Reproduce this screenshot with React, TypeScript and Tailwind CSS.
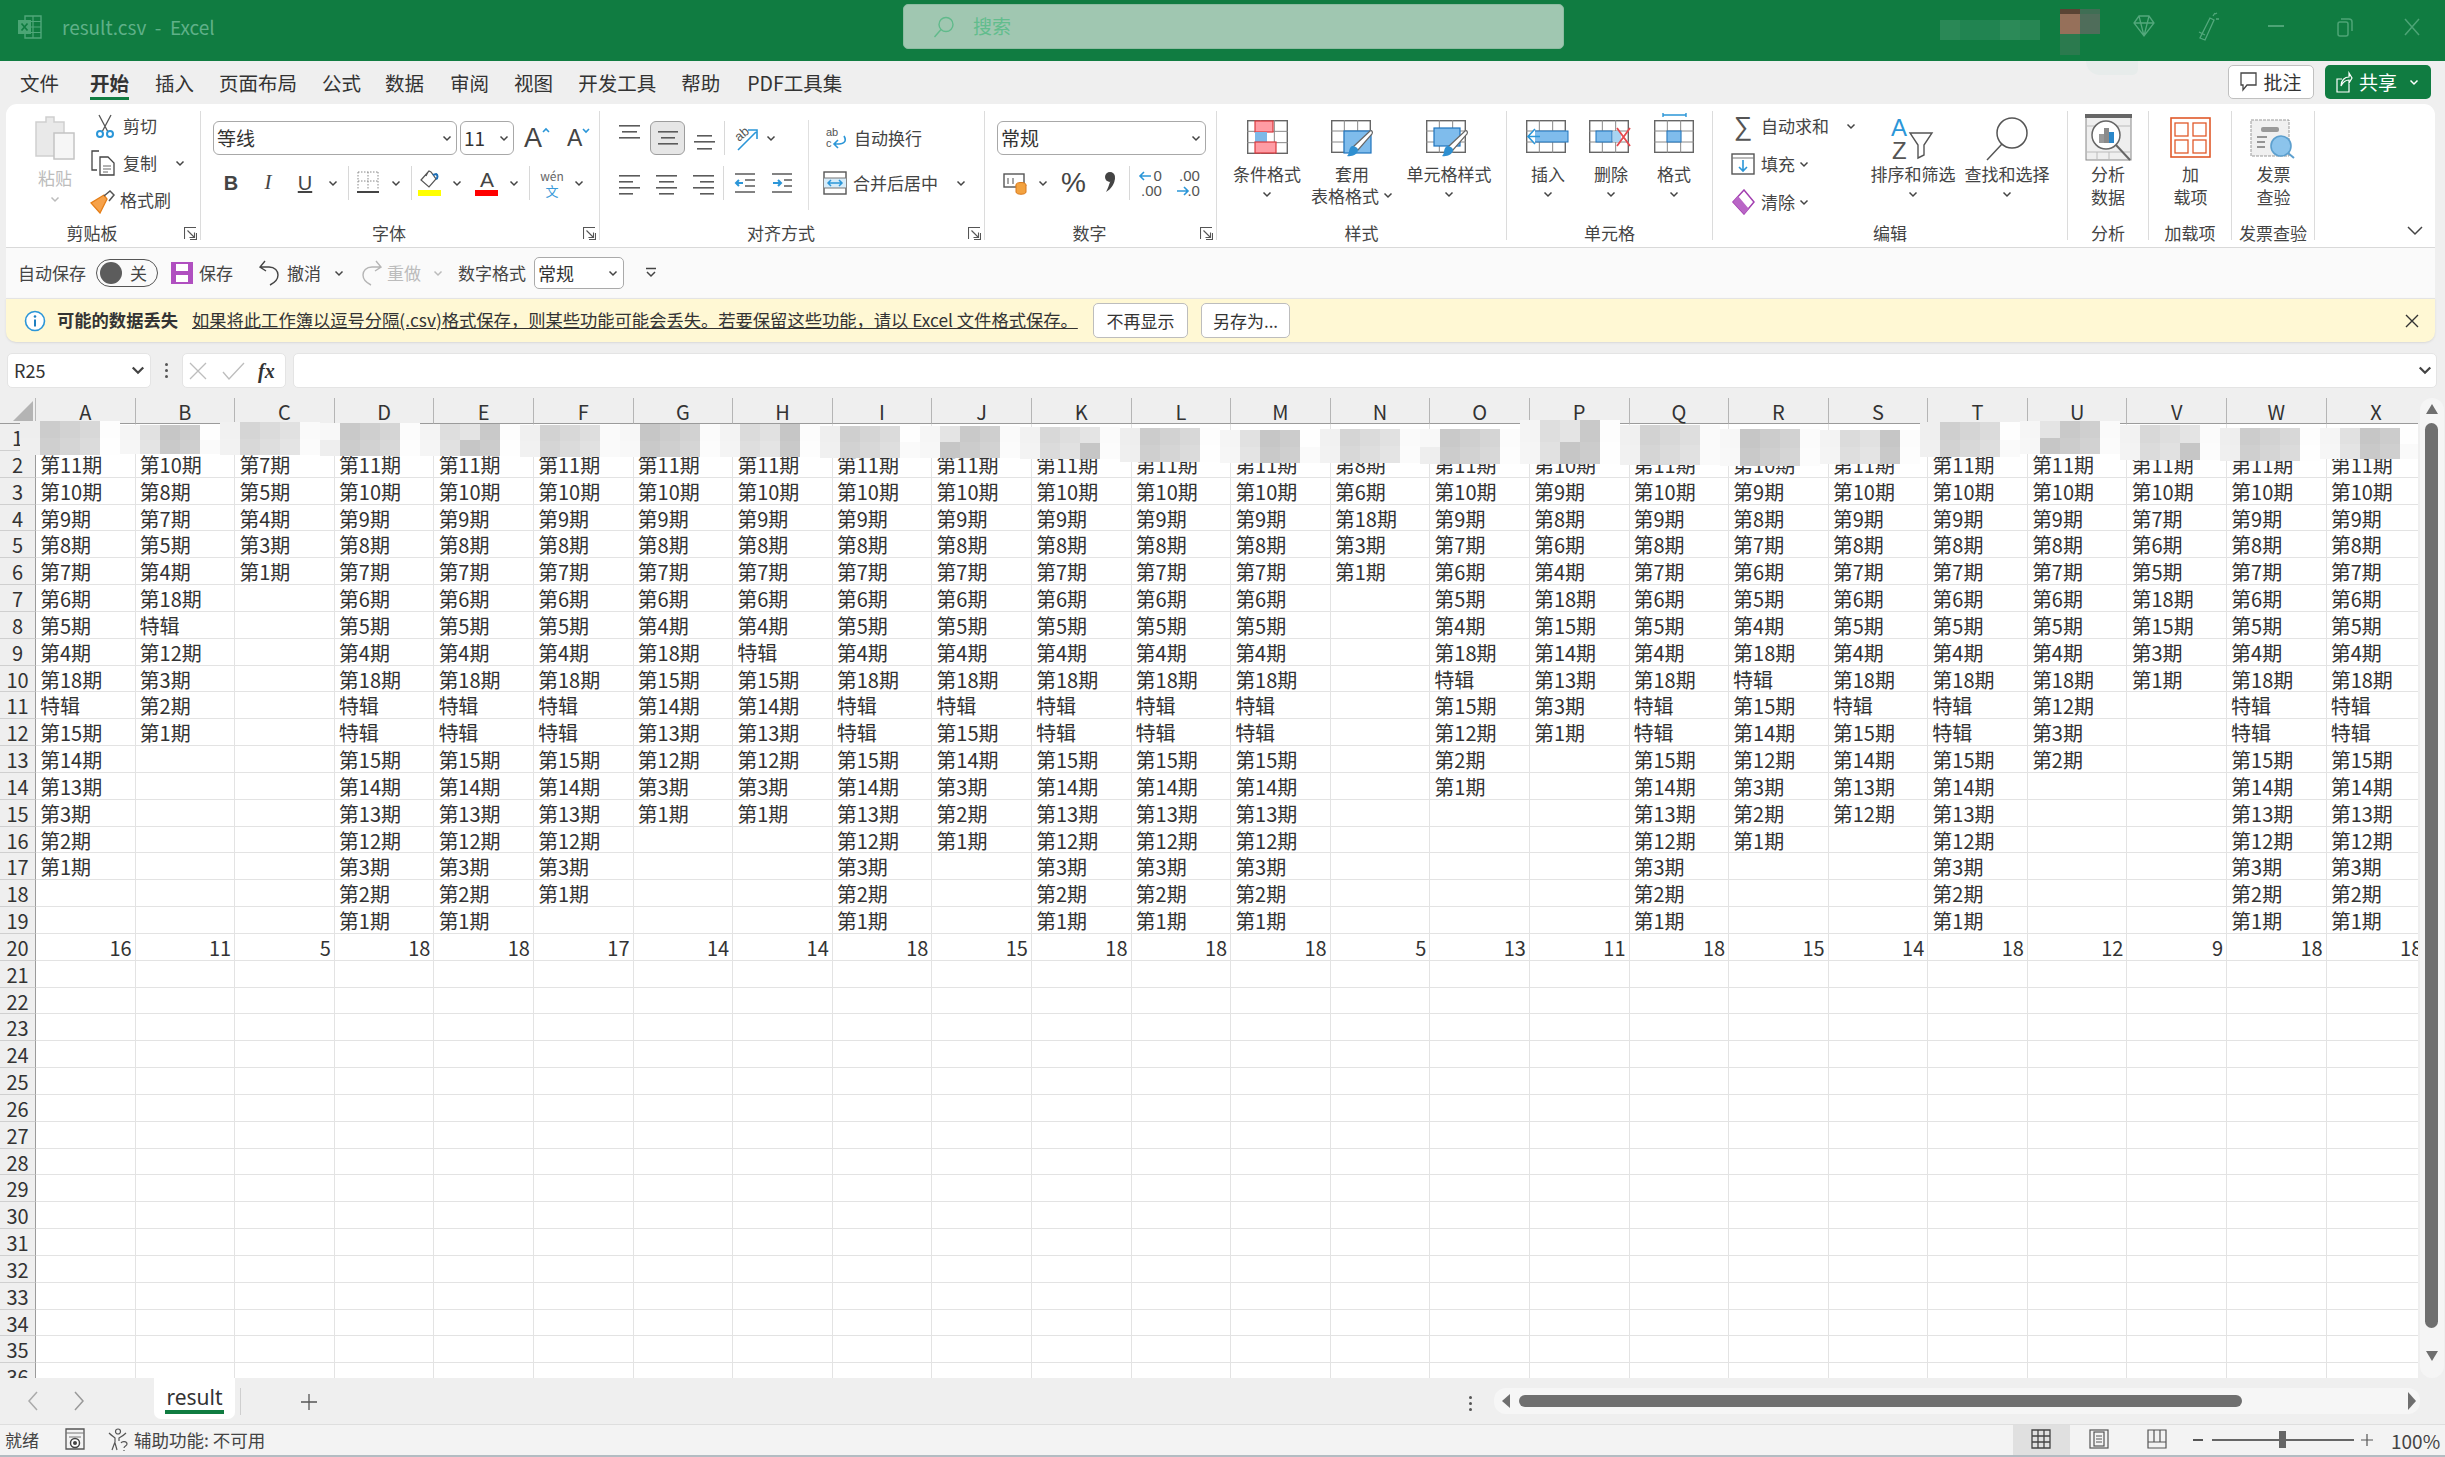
import React from "react";

const INK = "#5b5b5b";
const BLUE = "#2b96d8";
const COLS = "ABCDEFGHIJKLMNOPQRSTUVWX".split("");

const q = (s: string) => s.split(" ").map((v) => (v === "特" ? "特辑" : `第${v}期`));
const FULL = "11 10 9 8 7 6 5 4 18 特 特 15 14 13 12 3 2 1";

// one entry per column, cells go from row 2 downwards
const DATA: string[][] = [
  q("11 10 9 8 7 6 5 4 18 特 15 14 13 3 2 1"),
  q("10 8 7 5 4 18 特 12 3 2 1"),
  q("7 5 4 3 1"),
  q(FULL),
  q(FULL),
  q("11 10 9 8 7 6 5 4 18 特 特 15 14 13 12 3 1"),
  q("11 10 9 8 7 6 4 18 15 14 13 12 3 1"),
  q("11 10 9 8 7 6 4 特 15 14 13 12 3 1"),
  q(FULL),
  q("11 10 9 8 7 6 5 4 18 特 15 14 3 2 1"),
  q(FULL),
  q(FULL),
  q(FULL),
  q("8 6 18 3 1"),
  q("11 10 9 7 6 5 4 18 特 15 12 2 1"),
  q("10 9 8 6 4 18 15 14 13 3 1"),
  q(FULL),
  q("10 9 8 7 6 5 4 18 特 15 14 12 3 2 1"),
  q("11 10 9 8 7 6 5 4 18 特 15 14 13 12"),
  q(FULL),
  q("11 10 9 8 7 6 5 4 18 12 3 2"),
  q("11 10 7 6 5 18 15 3 1"),
  q(FULL),
  q(FULL),
];
const TOTALS = [16, 11, 5, 18, 18, 17, 14, 14, 18, 15, 18, 18, 18, 5, 13, 11, 18, 15, 14, 18, 12, 9, 18, 18];

// top and height of the smudged band over row 1, per column
const BAND: [number, number][] = [
  [421, 34], [425, 29], [422, 33], [423, 33], [424, 32], [425, 32], [424, 33], [424, 33],
  [426, 32], [426, 32], [427, 32], [428, 34], [430, 33], [429, 34], [429, 35], [420, 44],
  [425, 40], [429, 37], [430, 34], [422, 35], [421, 33], [425, 35], [428, 33], [428, 31],
];

function Chev({ className = "", color = "#444" }: { className?: string; color?: string }) {
  return (
    <svg width="10" height="7" viewBox="0 0 10 7" className={className}>
      <path d="M1.5 1.5 5 5l3.5-3.5" fill="none" stroke={color} strokeWidth="1.5" />
    </svg>
  );
}

function Launcher({ className = "" }: { className?: string }) {
  return (
    <svg width="13" height="13" viewBox="0 0 13 13" className={className}>
      <path d="M.5 12V.5H12M3.5 3.5l7 7M10.5 5.5v5h-5M12.5 6v6.5H6" fill="none" stroke="#555" strokeWidth="1.1" />
    </svg>
  );
}

function Group({ w, label, launcher, children }: { w: string; label: string; launcher?: boolean; children: React.ReactNode }) {
  return (
    <div className={`${w} relative h-[129px] shrink-0 border-r border-[#dcdcdc] flex flex-col`}>
      <div className="flex-1 min-h-0">{children}</div>
      <div className={`h-[19px] text-center text-[17px] leading-[24px] text-[#444] whitespace-nowrap ${launcher ? "pr-[22px]" : ""}`}>{label}</div>
      {launcher && <Launcher className="absolute right-[3px] bottom-[0px]" />}
    </div>
  );
}

function Lines({ rows }: { rows: [number, number, number][] }) {
  return (
    <svg width="22" height="26" viewBox="0 0 22 26">
      {rows.map(([y, a, b]) => (
        <rect key={y} x={a} y={y} width={b - a} height="1.6" fill={INK} />
      ))}
    </svg>
  );
}

function VDiv({ className = "" }: { className?: string }) {
  return <div className={`w-px h-[34px] shrink-0 bg-[#d8d8d8] ${className}`} />;
}

function Brush({ x, y }: { x: number; y: number }) {
  return (
    <g transform={`translate(${x} ${y})`}>
      <path d="M24 0c2-1 3 1 2 3L12 19l-5-3z" fill="#fff" stroke="#666" strokeWidth="1.2" />
      <path d="M6 15c3 0 6 2 6 4 0 4-6 7-11 6 3-2 1-8 5-10z" fill="#2f8fd0" />
    </g>
  );
}

function SheetGrid({ w = 40, h = 33 }: { w?: number; h?: number }) {
  const cw = w / 3;
  const ch = h / 3;
  return (
    <g fill="none" stroke="#666" strokeWidth="1.4">
      <rect x=".7" y=".7" width={w - 1.4} height={h - 1.4} />
      <path d={`M${cw} 0v${h}M${cw * 2} 0v${h}M0 ${ch}h${w}M0 ${ch * 2}h${w}`} strokeWidth="1" stroke="#888" />
    </g>
  );
}

function StackBtn({ icon, lines, chev = true, w }: { icon: React.ReactNode; lines: string[]; chev?: boolean; w: string }) {
  return (
    <div className={`${w} shrink-0 flex flex-col items-center text-[17px] leading-[23px] text-[#444] whitespace-nowrap`}>
      <div className="h-[50px] pt-[9px] flex items-start justify-center">{icon}</div>
      <div className="mt-[1px]">{lines[0]}</div>
      {lines[1] && <div>{lines[1]}</div>}
      {chev && <Chev className="mt-[6px]" />}
    </div>
  );
}

function TitleBar() {
  return (
    <div className="h-[61px] bg-[#107c41] flex items-center relative shrink-0">
      <svg width="24" height="24" viewBox="0 0 24 24" className="ml-[18px] -mt-[8px]">
        <path d="M7 1h16v22H7z" fill="none" stroke="#50a77a" strokeWidth="1.4" />
        <path d="M15 1v22M7 6.5h16M7 12h16M7 17.5h16" stroke="#50a77a" strokeWidth="1.2" />
        <rect x="0" y="5" width="13" height="14" fill="#4ba575" />
        <path d="M3.5 8.5l6 7M9.5 8.5l-6 7" stroke="#107c41" strokeWidth="1.7" />
      </svg>
      <div className="ml-[20px] -mt-[6px] text-[19px] text-[#5fb088]">result.csv&nbsp; -&nbsp; Excel</div>
      <div className="absolute left-[903px] top-[4px] w-[661px] h-[45px] rounded-[5px] bg-[#a0c7b1] border border-[#8cbca1] flex items-center pl-[29px]">
        <svg width="22" height="22" viewBox="0 0 22 22">
          <circle cx="13" cy="8.5" r="7" fill="none" stroke="#60ba8b" strokeWidth="1.4" />
          <path d="M8 13.5 1.5 21" stroke="#60ba8b" strokeWidth="1.4" />
        </svg>
        <span className="ml-[18px] text-[19px] text-[#62bd8d]">搜索</span>
      </div>
      {/* blurred account name and avatar */}
      <div className="absolute left-[1940px] top-[20px] flex h-[20px]">
        <div className="w-[20px] bg-[#2a8856]" />
        <div className="w-[40px] bg-[#218451]" />
        <div className="w-[20px] bg-[#2c8a58]" />
        <div className="w-[20px] bg-[#278653]" />
      </div>
      <div className="absolute left-[2060px] top-[9px] w-[40px] h-[46px] grid grid-cols-2 grid-rows-[5px_20px_21px]">
        <div className="bg-[#5a4434]" />
        <div className="bg-[#3f6e54]" />
        <div className="bg-[#96705a]" />
        <div className="bg-[#4f6d5a]" />
        <div className="bg-[#2b7a4e]" />
        <div className="bg-[#107c41]" />
      </div>
      <svg width="24" height="24" viewBox="0 0 24 24" className="absolute left-[2132px] top-[14px]">
        <path d="M7 2h10l5 7-10 13L2 9zM2 9h20M7 2l5 20 5-20" fill="none" stroke="#53a87c" strokeWidth="1.3" />
      </svg>
      <svg width="24" height="30" viewBox="0 0 24 30" className="absolute left-[2196px] top-[12px]">
        <path d="M14 6 4 26l5 2 9-20zM3 20l6 3M19 2l2-1M20 7l3 0M17 4l2-3" fill="none" stroke="#53a87c" strokeWidth="1.3" />
      </svg>
      <div className="absolute left-[2268px] top-[25px] w-[16px] h-[2px] bg-[#4da476]" />
      <svg width="16" height="20" viewBox="0 0 16 20" className="absolute left-[2337px] top-[17px]">
        <rect x="1" y="5" width="10" height="14" rx="2" fill="none" stroke="#4da476" strokeWidth="1.5" />
        <path d="M4 2h8c2 0 3 1 3 3v9" fill="none" stroke="#4da476" strokeWidth="1.5" />
      </svg>
      <svg width="18" height="20" viewBox="0 0 18 20" className="absolute left-[2403px] top-[17px]">
        <path d="M2 2l14 16M16 2 2 18" stroke="#4da476" strokeWidth="1.5" />
      </svg>
    </div>
  );
}

function TabRow() {
  const tabs: [string, string][] = [
    ["文件", "ml-[20px]"],
    ["开始", "ml-[31px]"],
    ["插入", "ml-[26px]"],
    ["页面布局", "ml-[25px]"],
    ["公式", "ml-[25px]"],
    ["数据", "ml-[24px]"],
    ["审阅", "ml-[26px]"],
    ["视图", "ml-[25px]"],
    ["开发工具", "ml-[25px]"],
    ["帮助", "ml-[25px]"],
    ["PDF工具集", "ml-[27px]"],
  ];
  return (
    <div className="h-[43px] bg-[#efefef] flex items-center relative shrink-0">
      {tabs.map(([t, m]) => (
        <div key={t} className={`${m} relative text-[19.5px] leading-[43px] text-[#333] ${t === "开始" ? "font-bold" : ""}`}>
          {t}
          {t === "开始" && <div className="absolute left-0 right-0 bottom-[4px] h-[3px] bg-[#107c41]" />}
        </div>
      ))}
      <div className="absolute left-[2086px] top-0 w-[52px] h-[14px] bg-[#e7eceb] rounded-bl-[30px] rounded-br-[12px]" />
      <div className="absolute left-[2228px] top-[4px] w-[86px] h-[34px] rounded-[5px] bg-white border border-[#c0c0c0] flex items-center justify-center gap-[6px] text-[19px] text-[#333]">
        <svg width="17" height="20" viewBox="0 0 17 20">
          <path d="M1 1h15v12H7l-4 5v-5H1z" fill="none" stroke="#444" strokeWidth="1.3" />
        </svg>
        批注
      </div>
      <div className="absolute left-[2325px] top-[4px] w-[106px] h-[34px] rounded-[5px] bg-[#107c41] flex items-center pl-[10px] text-[19px] text-white">
        <svg width="18" height="22" viewBox="0 0 18 22">
          <path d="M7 8H2v13h12v-8M6 15c0-6 4-9 8-9V2l3 5-3 5V9c-4 0-6 2-8 6z" fill="none" stroke="#fff" strokeWidth="1.2" />
        </svg>
        <span className="ml-[6px]">共享</span>
        <Chev className="ml-[12px]" color="#fff" />
      </div>
    </div>
  );
}

function Clipboard() {
  return (
    <Group w="w-[195px]" label="剪贴板" launcher>
      <div className="flex">
        <div className="ml-[24px] w-[50px] flex flex-col items-center text-[#bcbcbc] text-[17px]">
          <svg width="40" height="44" viewBox="0 0 40 44" className="mt-[5px]">
            <path d="M1 6h10V1h8v5h10v34H1z" fill="#e9e9e9" stroke="#cfcfcf" strokeWidth="1.5" />
            <rect x="19" y="17" width="20" height="26" fill="#f6f6f6" stroke="#c4c4c4" strokeWidth="1.5" />
          </svg>
          <div className="mt-[6px] leading-[24px]">粘贴</div>
          <Chev className="mt-[6px]" color="#bbb" />
        </div>
        <div className="ml-[12px] flex flex-col gap-[7px] text-[17px] text-[#444] leading-[30px]">
          <div className="flex h-[30px] items-center">
            <svg width="20" height="24" viewBox="0 0 20 24" className="ml-[3px]">
              <path d="M4 1l9 17M16 1 7 18" stroke="#555" strokeWidth="1.3" fill="none" />
              <circle cx="5" cy="20" r="3" fill="none" stroke={BLUE} strokeWidth="2" />
              <circle cx="15" cy="20" r="3" fill="none" stroke={BLUE} strokeWidth="2" />
            </svg>
            <span className="ml-[8px]">剪切</span>
          </div>
          <div className="flex h-[30px] items-center">
            <svg width="24" height="26" viewBox="0 0 24 26" className="-ml-[1px]">
              <path d="M8 1H1v19h5M9 7h8l6 6v12H9z" fill="none" stroke="#444" strokeWidth="1.3" />
              <path d="M12 16h8M12 19h8M12 22h5" stroke="#666" strokeWidth="1" />
            </svg>
            <span className="ml-[8px]">复制</span>
            <Chev className="ml-[18px]" />
          </div>
          <div className="flex h-[30px] items-center">
            <svg width="26" height="24" viewBox="0 0 26 24" className="mt-[3px] -ml-[2px]">
              <path d="M14 5 1 13l9 10 7-14z" fill="#f6a24a" stroke="#e57e17" strokeWidth="1.3" />
              <path d="M14 6l6-5 4 4-5 6" fill="none" stroke="#555" strokeWidth="1.5" />
            </svg>
            <span className="ml-[4px]">格式刷</span>
          </div>
        </div>
      </div>
    </Group>
  );
}

function SelectBox({ w, text, className = "", textClass = "" }: { w: string; text: string; className?: string; textClass?: string }) {
  return (
    <div className={`${w} h-[34px] shrink-0 rounded-[6px] border border-[#a8a8a8] flex items-center justify-between pl-[3px] pr-[4px] text-[#333] text-[19px] ${className}`}>
      <span className={textClass}>{text}</span>
      <Chev />
    </div>
  );
}

function Caret({ up }: { up?: boolean }) {
  return (
    <svg width="8" height="6" viewBox="0 0 8 6" className="self-start mt-[4px]">
      <path d={up ? "M1 5l3-3 3 3" : "M1 1l3 3 3-3"} fill="none" stroke={BLUE} strokeWidth="1.6" />
    </svg>
  );
}

function FontGroup() {
  return (
    <Group w="w-[399px]" label="字体" launcher>
      <div className="pt-[10px]">
        <div className="flex items-center h-[34px] ml-[12px]">
          <SelectBox w="w-[244px]" text="等线" />
          <SelectBox w="w-[54px]" text="11" className="ml-[3px]" />
          <div className="ml-[10px] flex items-end text-[27px] leading-[30px] text-[#444] font-['Liberation_Sans',sans-serif]">
            A<Caret up />
          </div>
          <div className="ml-[17px] flex items-end text-[23px] leading-[28px] text-[#444] font-['Liberation_Sans',sans-serif]">
            A<Caret />
          </div>
        </div>
        <div className="flex items-center h-[34px] mt-[11px] ml-[12px] text-[#444]">
          <div className="w-[36px] text-center font-bold text-[20px] font-['Liberation_Sans',sans-serif]">B</div>
          <div className="w-[38px] text-center italic text-[21px] font-['Liberation_Serif',serif]">I</div>
          <div className="w-[36px] text-center underline text-[20px] font-['Liberation_Sans',sans-serif]">U</div>
          <Chev className="ml-[5px]" />
          <VDiv className="ml-[10px]" />
          <svg width="22" height="24" viewBox="0 0 22 24" className="ml-[8px]">
            <path d="M1 1h20M1 1v18M21 1v18M1 10h20M11 1v18" stroke="#888" strokeWidth="1" strokeDasharray="1.5 1.5" fill="none" />
            <rect x="0" y="20" width="22" height="2" fill="#444" />
          </svg>
          <Chev className="ml-[12px]" />
          <VDiv className="ml-[10px]" />
          <div className="ml-[6px] relative w-[24px] h-[26px]">
            <svg width="24" height="20" viewBox="0 0 24 20">
              <path d="M11 1 3 10l8 7 7-8-5-7zM8 6l2-4" fill="none" stroke="#555" strokeWidth="1.2" />
              <path d="M18 9c2-1 2-4 0-5l-3 1" fill="none" stroke="#1f6fb5" strokeWidth="2" />
            </svg>
            <div className="absolute left-0 bottom-0 w-[23px] h-[6px] bg-[#ffff00]" />
          </div>
          <Chev className="ml-[10px]" />
          <div className="ml-[13px] relative w-[24px] h-[26px] text-center text-[21px] leading-[20px] text-[#444] font-['Liberation_Sans',sans-serif]">
            A
            <div className="absolute left-0 bottom-0 w-[23px] h-[6px] bg-[#ff0000]" />
          </div>
          <Chev className="ml-[10px]" />
          <VDiv className="ml-[10px]" />
          <div className="ml-[10px] w-[24px] flex flex-col items-center">
            <span className="text-[12px] leading-[15px] text-[#666]">wén</span>
            <span className="text-[13px] leading-[15px] text-[#3a9ad9]">文</span>
          </div>
          <Chev className="ml-[10px]" />
        </div>
      </div>
    </Group>
  );
}

function AlignGroup() {
  return (
    <Group w="w-[385px]" label="对齐方式" launcher>
      <div className="pt-[10px] relative">
        <div className="absolute left-[208px] top-[9px] w-px h-[90px] bg-[#e0e0e0]" />
        <div className="flex items-center h-[34px] ml-[19px]">
          <div className="-mt-[8px] h-[26px]">
            <Lines rows={[[4, 0, 21], [10, 3, 18], [16, 0, 21]]} />
          </div>
          <div className="ml-[9px] w-[35px] h-[34px] rounded-[6px] bg-[#e6e6e6] border border-[#9d9d9d] flex items-center justify-center">
            <Lines rows={[[6, 1, 21], [12, 4, 18], [18, 1, 21]]} />
          </div>
          <div className="ml-[9px] mt-[8px] h-[26px]">
            <Lines rows={[[6, 3, 18], [12, 0, 21], [19, 3, 18]]} />
          </div>
          <VDiv className="ml-[8px]" />
          <svg width="26" height="26" viewBox="0 0 26 26" className="ml-[8px] overflow-visible">
            <text x="2" y="14" fontSize="13" fill="#555" transform="rotate(-40 8 10)" fontFamily="Liberation Sans">ab</text>
            <path d="M5 25 23 7M15 5h9v9" fill="none" stroke={BLUE} strokeWidth="1.6" />
          </svg>
          <Chev className="ml-[7px]" />
          <svg width="22" height="24" viewBox="0 0 22 24" className="ml-[49px]">
            <text x="1" y="10" fontSize="11" fill="#555" fontFamily="Liberation Sans">ab</text>
            <text x="1" y="21" fontSize="11" fill="#555" fontFamily="Liberation Sans">c</text>
            <path d="M19 10c3 5 0 8-5 8H9M13 14l-4 4 4 4" fill="none" stroke={BLUE} strokeWidth="1.6" />
          </svg>
          <span className="ml-[7px] text-[17px] text-[#444]">自动换行</span>
        </div>
        <div className="flex items-center h-[34px] mt-[11px] ml-[19px]">
          <Lines rows={[[5, 0, 21], [11, 0, 14], [17, 0, 21], [23, 0, 14]]} />
          <div className="ml-[15px]">
            <Lines rows={[[5, 0, 21], [11, 3, 18], [17, 0, 21], [23, 3, 18]]} />
          </div>
          <div className="ml-[15px]">
            <Lines rows={[[5, 0, 21], [11, 7, 21], [17, 0, 21], [23, 7, 21]]} />
          </div>
          <VDiv className="ml-[8px]" />
          <svg width="22" height="24" viewBox="0 0 22 24" className="ml-[10px]">
            <path d="M1 3h20M11 9h10M11 15h10M1 21h20" stroke={INK} strokeWidth="1.6" />
            <path d="M9 12H2M5 9l-3 3 3 3" fill="none" stroke={BLUE} strokeWidth="2" />
          </svg>
          <svg width="22" height="24" viewBox="0 0 22 24" className="ml-[15px]">
            <path d="M1 3h20M13 9h8M13 15h8M1 21h20" stroke={INK} strokeWidth="1.6" />
            <path d="M2 12h8M7 9l3 3-3 3" fill="none" stroke={BLUE} strokeWidth="2" />
          </svg>
          <svg width="24" height="24" viewBox="0 0 24 24" className="ml-[30px]">
            <rect x="1" y="1" width="22" height="22" fill="#fff" stroke="#555" strokeWidth="1.4" />
            <rect x="1" y="7" width="22" height="10" fill="#d6ecfa" />
            <path d="M5 12h14M8 9l-3 3 3 3M16 9l3 3-3 3" fill="none" stroke={BLUE} strokeWidth="1.5" />
            <path d="M1 7h22M1 17h22" stroke="#777" strokeWidth="1" />
          </svg>
          <span className="ml-[6px] text-[17px] text-[#444]">合并后居中</span>
          <Chev className="ml-[18px]" />
        </div>
      </div>
    </Group>
  );
}

function NumberGroup() {
  return (
    <Group w="w-[232px]" label="数字" launcher>
      <div className="pt-[10px]">
        <SelectBox w="w-[209px]" text="常规" className="ml-[12px]" />
        <div className="flex items-center h-[34px] mt-[11px] ml-[18px]">
          <svg width="24" height="24" viewBox="0 0 24 24">
            <rect x="1" y="3" width="20" height="13" fill="none" stroke="#555" strokeWidth="1.4" />
            <path d="M5 7v6M10 7v6" stroke="#888" strokeWidth="1.5" />
            <ellipse cx="18" cy="14" rx="5" ry="2.5" fill="#f3a23f" stroke="#d9791a" />
            <path d="M13 14v7c0 3 10 3 10 0v-7" fill="#f3a23f" stroke="#d9791a" />
          </svg>
          <Chev className="ml-[11px]" />
          <div className="ml-[13px] text-[28px] leading-[34px] text-[#444] font-['Liberation_Sans',sans-serif]">%</div>
          <svg width="14" height="24" viewBox="0 0 14 24" className="ml-[17px]">
            <circle cx="7" cy="6" r="5" fill="#444" />
            <path d="M12 6c0 7-4 12-9 15 2-4 3-7 4-10z" fill="#444" />
          </svg>
          <VDiv className="ml-[12px]" />
          <div className="ml-[8px] w-[24px] relative h-[30px] text-[15px] leading-[15px] text-[#555] font-['Liberation_Sans',sans-serif] text-right">
            <div>0</div>
            <div>.00</div>
            <svg width="14" height="10" viewBox="0 0 14 10" className="absolute left-0 top-[3px]">
              <path d="M13 5H2M6 1 2 5l4 4" fill="none" stroke={BLUE} strokeWidth="1.6" />
            </svg>
          </div>
          <div className="ml-[14px] w-[24px] relative h-[30px] text-[15px] leading-[15px] text-[#555] font-['Liberation_Sans',sans-serif] text-right">
            <div>.00</div>
            <div>.0</div>
            <svg width="14" height="10" viewBox="0 0 14 10" className="absolute left-0 top-[18px]">
              <path d="M1 5h11M8 1l4 4-4 4" fill="none" stroke={BLUE} strokeWidth="1.6" />
            </svg>
          </div>
        </div>
      </div>
    </Group>
  );
}

function StylesGroup() {
  return (
    <Group w="w-[290px]" label="样式">
      <div className="flex pl-[12px]">
        <StackBtn
          w="w-[76px]"
          lines={["条件格式"]}
          icon={
            <svg width="41" height="34" viewBox="0 0 41 34">
              <SheetGrid w={41} h={34} />
              <rect x="8" y="1" width="18" height="11" fill="#ff9ca4" stroke="#d93a3f" strokeWidth="1.2" />
              <rect x="8" y="12" width="12" height="10" fill="#7db9e8" />
              <rect x="8" y="22" width="21" height="11" fill="#ff9ca4" stroke="#d93a3f" strokeWidth="1.2" />
            </svg>
          }
        />
        <StackBtn
          w="w-[94px]"
          chev={false}
          lines={["套用"]}
          icon={
            <svg width="46" height="42" viewBox="0 0 46 42" className="ml-[3px]">
              <SheetGrid w={40} h={33} />
              <rect x="13" y="11" width="27" height="22" fill="#7fbcec" stroke="#1f74bd" strokeWidth="1.2" />
              <Brush x={15} y={11} />
            </svg>
          }
        />
        <StackBtn
          w="w-[100px]"
          lines={["单元格样式"]}
          icon={
            <svg width="46" height="42" viewBox="0 0 46 42">
              <SheetGrid w={40} h={33} />
              <rect x="8" y="8" width="26" height="18" fill="#7fbcec" stroke="#1f74bd" strokeWidth="1.2" />
              <Brush x={15} y={11} />
            </svg>
          }
        />
      </div>
      <div className="absolute left-[94px] top-[73px] flex items-center text-[17px] leading-[23px] text-[#444] whitespace-nowrap">
        表格格式
        <Chev className="ml-[4px]" />
      </div>
    </Group>
  );
}

function CellsGroup() {
  return (
    <Group w="w-[206px]" label="单元格">
      <div className="flex pl-[11px]">
        <StackBtn
          w="w-[60px]"
          lines={["插入"]}
          icon={
            <svg width="44" height="34" viewBox="0 0 44 34">
              <SheetGrid w={40} h={33} />
              <rect x="8" y="11" width="34" height="11" fill="#7fbcec" stroke="#1f74bd" />
              <path d="M14 16.5H3M9 9l-7 7.5L9 24" fill="#fff" stroke={BLUE} strokeWidth="1.6" />
            </svg>
          }
        />
        <StackBtn
          w="w-[66px]"
          lines={["删除"]}
          icon={
            <svg width="44" height="34" viewBox="0 0 44 34">
              <SheetGrid w={40} h={33} />
              <rect x="7" y="11" width="16" height="11" fill="#7fbcec" stroke="#1f74bd" />
              <path d="M24 11h8v11h-8" fill="#a8d4f2" />
              <path d="M28 8l13 18M41 8 28 26" stroke="#e6484d" strokeWidth="1.8" />
            </svg>
          }
        />
        <StackBtn
          w="w-[60px]"
          lines={["格式"]}
          icon={
            <svg width="41" height="40" viewBox="0 0 41 40" className="-mt-[7px]">
              <path d="M9 2h23M9 0v4M32 0v4" stroke={BLUE} strokeWidth="1.4" />
              <g transform="translate(0 7)">
                <SheetGrid w={40} h={33} />
                <rect x="13" y="11" width="14" height="11" fill="#7fbcec" stroke="#1f74bd" />
              </g>
            </svg>
          }
        />
      </div>
    </Group>
  );
}

function EditGroup() {
  return (
    <Group w="w-[355px]" label="编辑">
      <div className="flex">
        <div className="ml-[18px] flex flex-col text-[17px] text-[#444]">
          <div className="flex items-center h-[30px]">
            <span className="w-[24px] text-center text-[26px] leading-[30px] text-[#555] font-['Liberation_Sans',sans-serif]">∑</span>
            <span className="ml-[6px]">自动求和</span>
            <Chev className="ml-[17px]" />
          </div>
          <div className="flex items-center h-[30px] mt-[8px]">
            <svg width="24" height="22" viewBox="0 0 24 22">
              <rect x="1" y="1" width="22" height="20" fill="#fff" stroke="#555" strokeWidth="1.4" />
              <path d="M1 5h22" stroke="#777" />
              <path d="M12 7v11M8 14l4 4 4-4" fill="none" stroke={BLUE} strokeWidth="1.6" />
            </svg>
            <span className="ml-[6px]">填充</span>
            <Chev className="ml-[4px]" />
          </div>
          <div className="flex items-center h-[30px] mt-[8px]">
            <svg width="24" height="26" viewBox="0 0 24 26">
              <path d="M13 1l10 12-10 12L2 13z" fill="#fff" stroke="#a23fb0" strokeWidth="1.5" />
              <path d="M7 7l11 13-5 5L2 13z" fill="#b966c6" />
            </svg>
            <span className="ml-[6px]">清除</span>
            <Chev className="ml-[4px]" />
          </div>
        </div>
        <div className="ml-[10px] w-[94px] flex flex-col items-center text-[17px] leading-[23px] text-[#444]">
          <div className="h-[50px] flex items-end">
            <svg width="44" height="44" viewBox="0 0 44 44" className="overflow-visible">
              <text x="0" y="19" fontSize="24" fill={BLUE} fontFamily="Liberation Sans">A</text>
              <text x="1" y="42" fontSize="24" fill="#555" fontFamily="Liberation Sans">Z</text>
              <path d="M19 16h22L33 28v10l-6 3V28z" fill="none" stroke="#555" strokeWidth="1.4" />
            </svg>
          </div>
          <div className="mt-[1px] whitespace-nowrap">排序和筛选</div>
          <Chev className="mt-[6px]" />
        </div>
        <div className="w-[94px] flex flex-col items-center text-[17px] leading-[23px] text-[#444]">
          <div className="h-[50px] flex items-end">
            <svg width="44" height="44" viewBox="0 0 44 44">
              <circle cx="27" cy="16" r="15" fill="none" stroke="#555" strokeWidth="1.5" />
              <path d="M17 27 2 43" stroke="#555" strokeWidth="1.5" />
            </svg>
          </div>
          <div className="mt-[1px] whitespace-nowrap">查找和选择</div>
          <Chev className="mt-[6px]" />
        </div>
      </div>
    </Group>
  );
}

function Extras() {
  return (
    <>
      <Group w="w-[81px]" label="分析">
        <StackBtn
          w="w-[80px]"
          chev={false}
          lines={["分析", "数据"]}
          icon={
            <svg width="47" height="47" viewBox="0 0 47 47" className="-mt-[6px]">
              <rect x="1" y="1" width="45" height="45" fill="#efefef" stroke="#888" />
              <rect x="0" y="0" width="47" height="4" fill="#666" />
              <path d="M1 12h45M1 38h45M12 38v8M24 38v8" stroke="#bbb" />
              <circle cx="21" cy="21" r="14" fill="#fff" stroke="#666" strokeWidth="1.5" />
              <rect x="14" y="20" width="5" height="9" fill="#999" />
              <rect x="19" y="14" width="5" height="15" fill="#8a8a8a" />
              <rect x="24" y="18" width="5" height="11" fill="#2b87c9" />
              <path d="M31 31 45 46" stroke="#666" strokeWidth="2" />
            </svg>
          }
        />
      </Group>
      <Group w="w-[83px]" label="加载项">
        <StackBtn
          w="w-[83px]"
          chev={false}
          lines={["加", "载项"]}
          icon={
            <svg width="41" height="41" viewBox="0 0 41 41" className="-mt-[3px]">
              <rect x="1" y="1" width="39" height="39" fill="#fff" stroke="#e0592a" strokeWidth="1.6" />
              <rect x="5" y="6" width="13" height="13" fill="none" stroke="#e0592a" strokeWidth="1.3" />
              <rect x="23" y="6" width="13" height="13" fill="none" stroke="#e0592a" strokeWidth="1.3" />
              <rect x="5" y="23" width="13" height="13" fill="none" stroke="#e0592a" strokeWidth="1.3" />
              <rect x="23" y="23" width="13" height="13" fill="none" stroke="#e0592a" strokeWidth="1.3" />
            </svg>
          }
        />
      </Group>
      <Group w="w-[83px]" label="发票查验">
        <StackBtn
          w="w-[83px]"
          chev={false}
          lines={["发票", "查验"]}
          icon={
            <svg width="47" height="40" viewBox="0 0 47 40" className="-mt-[1px]">
              <rect x="1" y="1" width="38" height="36" fill="#f0f0f0" stroke="#999" strokeDasharray="3 1" />
              <rect x="11" y="8" width="18" height="5" rx="2" fill="#999" />
              <path d="M7 18h10M7 23h8M7 28h8" stroke="#777" strokeWidth="1.4" />
              <circle cx="31" cy="27" r="10" fill="#8cc4ec" stroke="#5c9fce" strokeWidth="1.6" />
              <path d="M38 34l6 5" stroke="#5c9fce" strokeWidth="2" />
            </svg>
          }
        />
      </Group>
    </>
  );
}

function Ribbon() {
  return (
    <div className="h-[144px] mx-[6px] w-[2429px] bg-white rounded-t-[11px] pt-[7px] flex relative shrink-0 border-b border-[#d9d9d9]">
      <Clipboard />
      <FontGroup />
      <AlignGroup />
      <NumberGroup />
      <StylesGroup />
      <CellsGroup />
      <EditGroup />
      <Extras />
      <svg width="16" height="10" viewBox="0 0 16 10" className="absolute right-[12px] bottom-[11px]">
        <path d="M1 1l7 7 7-7" fill="none" stroke="#444" strokeWidth="1.5" />
      </svg>
    </div>
  );
}

function Qat() {
  return (
    <div className="h-[50px] mx-[6px] w-[2429px] bg-[#fafafa] flex items-center text-[17px] text-[#444] shrink-0">
      <span className="ml-[12px]">自动保存</span>
      <div className="ml-[10px] w-[62px] h-[28px] rounded-full border border-[#555] flex items-center pl-[3px]">
        <div className="w-[22px] h-[22px] rounded-full bg-[#5c5c5c]" />
        <span className="ml-[8px] text-[#444]">关</span>
      </div>
      <svg width="24" height="24" viewBox="0 0 24 24" className="ml-[12px]">
        <rect x="1" y="1" width="22" height="22" fill="#b04fc0" />
        <rect x="6" y="3" width="12" height="7" fill="#fff" />
        <rect x="6" y="14" width="12" height="7" fill="#fff" />
      </svg>
      <span className="ml-[5px]">保存</span>
      <svg width="24" height="26" viewBox="0 0 24 26" className="ml-[24px]">
        <path d="M8 1 3 7l6 4M3 7h9c6 0 9 4 9 8 0 5-4 8-8 10" fill="none" stroke="#444" strokeWidth="1.4" />
      </svg>
      <span className="ml-[6px]">撤消</span>
      <Chev className="ml-[13px]" />
      <svg width="24" height="26" viewBox="0 0 24 26" className="ml-[16px]">
        <path d="M16 1l5 6-6 4M21 7h-9C6 7 3 11 3 15c0 5 4 8 8 10" fill="none" stroke="#b5b5b5" strokeWidth="1.4" />
      </svg>
      <span className="ml-[3px] text-[#bcbcbc]">重做</span>
      <Chev className="ml-[12px]" color="#bbb" />
      <span className="ml-[15px]">数字格式</span>
      <div className="ml-[8px] w-[90px] h-[32px] rounded-[5px] border border-[#aaa] bg-white flex items-center justify-between pl-[3px] pr-[5px] text-[#333] text-[18px]">
        常规
        <Chev />
      </div>
      <svg width="12" height="12" viewBox="0 0 12 12" className="ml-[21px]">
        <path d="M1 1.5h10" stroke="#444" strokeWidth="1.5" />
        <path d="M2 5l4 4 4-4" fill="none" stroke="#444" strokeWidth="1.5" />
      </svg>
    </div>
  );
}

function Notice() {
  return (
    <div className="h-[44px] mx-[6px] w-[2429px] bg-[#fff8d4] rounded-b-[10px] border-t border-[#e4e4e4] shadow-[0_1px_2px_#d8d8d8] flex items-center text-[17.3px] text-[#333] relative shrink-0">
      <svg width="22" height="22" viewBox="0 0 22 22" className="ml-[18px]">
        <circle cx="11" cy="11" r="9.5" fill="#fff" stroke="#2b96d8" strokeWidth="1.6" />
        <path d="M11 9.5v7" stroke="#1f7fc0" strokeWidth="2" />
        <circle cx="11" cy="6.5" r="1.3" fill="#1f7fc0" />
      </svg>
      <span className="ml-[11px] -mt-[2px] font-bold whitespace-nowrap">可能的数据丢失</span>
      <span className="ml-[14px] -mt-[2px] underline whitespace-nowrap">如果将此工作簿以逗号分隔(.csv)格式保存，则某些功能可能会丢失。若要保留这些功能，请以 Excel 文件格式保存。</span>
      <div className="absolute left-[1087px] top-[4px] w-[95px] h-[35px] rounded-[5px] bg-white border border-[#bdbdbd] flex items-center justify-center text-[17px]">不再显示</div>
      <div className="absolute left-[1195px] top-[4px] w-[89px] h-[35px] rounded-[5px] bg-white border border-[#bdbdbd] flex items-center justify-center text-[17px]">另存为...</div>
      <svg width="14" height="14" viewBox="0 0 14 14" className="absolute right-[16px] top-[15px]">
        <path d="M1 1l12 12M13 1 1 13" stroke="#333" strokeWidth="1.4" />
      </svg>
    </div>
  );
}

function FormulaBar() {
  return (
    <div className="h-[35px] mt-[11px] flex items-center shrink-0 text-[#333]">
      <div className="ml-[7px] w-[144px] h-full bg-white rounded-[5px] border border-[#e4e4e4] flex items-center justify-between pl-[6px] pr-[7px] text-[18px]">
        R25
        <Chev className="scale-150" />
      </div>
      <div className="ml-[14px] flex flex-col gap-[3px]">
        <div className="w-[3px] h-[3px] rounded-full bg-[#555]" />
        <div className="w-[3px] h-[3px] rounded-full bg-[#555]" />
        <div className="w-[3px] h-[3px] rounded-full bg-[#555]" />
      </div>
      <div className="ml-[14px] w-[104px] h-full bg-white rounded-[5px] border border-[#e4e4e4] flex items-center pl-[6px]">
        <svg width="18" height="18" viewBox="0 0 18 18">
          <path d="M1 1l16 16M17 1 1 17" stroke="#bdbdbd" strokeWidth="1.3" />
        </svg>
        <svg width="24" height="18" viewBox="0 0 24 18" className="ml-[15px]">
          <path d="M1 10l6 7L22 1" fill="none" stroke="#bdbdbd" strokeWidth="1.3" />
        </svg>
        <span className="ml-[12px] italic font-bold text-[20px] font-['Liberation_Serif',serif]">fx</span>
      </div>
      <div className="ml-[7px] w-[2144px] h-full bg-white rounded-[5px] border border-[#e4e4e4] flex items-center justify-end pr-[6px]">
        <Chev className="scale-150" />
      </div>
    </div>
  );
}

function Smudge() {
  // pixelated blur that hides row 1
  return (
    <div className="absolute left-[20px] top-0 flex items-start pointer-events-none">
      {COLS.map((c, i) => {
        const [top, h] = BAND[i];
        const rows = [0, 1];
        return (
          <div key={c} className="w-[100px] shrink-0 flex flex-col" style={{ marginTop: top - 398, height: h }}>
            {rows.map((r) => (
              <div key={r} className="flex flex-1">
                {[0, 1, 2, 3, 4].map((t) => {
                  const seed = (i * 7 + t * 13 + r * 23) % 11;
                  const gray = t >= 1 && t <= 3 ? 198 + seed * 3 : t === 0 ? 238 + seed : 250 + (seed % 5);
                  return <div key={t} className="w-[20px]" style={{ backgroundColor: `rgb(${gray},${gray},${gray})` }} />;
                })}
              </div>
            ))}
          </div>
        );
      })}
    </div>
  );
}

function Sheet() {
  const rows = Array.from({ length: 35 }, (_, i) => i + 2);
  return (
    <div className="h-[980px] w-[2418px] mt-[10px] bg-white relative overflow-hidden shrink-0 font-['Noto_Sans_CJK_SC',sans-serif] text-[20px] text-[#333]">
      <div className="flex h-[26px] bg-[#efefef]">
        <div className="w-[36px] shrink-0 relative border-r border-[#b9b9b9] border-b border-b-[#9b9b9b]">
          <div className="absolute right-[2px] bottom-[2px] w-0 h-0 border-l-[20px] border-l-transparent border-b-[20px] border-b-[#b4b4b4]" />
        </div>
        {COLS.map((c) => (
          <div key={c} className="w-[99.6px] shrink-0 text-center leading-[28px] border-r border-[#b5b5b5] border-b border-b-[#9b9b9b]">
            {c}
          </div>
        ))}
      </div>
      <div className="flex h-[27px]">
        <div className="w-[36px] shrink-0 bg-[#efefef] text-center leading-[28px] border-r border-[#9b9b9b] border-b border-b-[#cfcfcf]">1</div>
        {COLS.map((c) => (
          <div key={c} className="w-[99.6px] shrink-0 border-r border-b border-[#e3e3e3]" />
        ))}
      </div>
      {rows.map((r) => (
        <div key={r} className="flex h-[26.83px]">
          <div className="w-[36px] shrink-0 bg-[#efefef] text-center leading-[28px] border-r border-[#9b9b9b] border-b border-b-[#cfcfcf]">{r}</div>
          {COLS.map((c, i) => (
            <div
              key={c}
              className={`w-[99.6px] shrink-0 border-r border-b border-[#e3e3e3] leading-[27px] whitespace-nowrap overflow-visible ${r === 20 ? "text-right pr-[3px]" : "pl-[4px]"}`}
            >
              {r === 20 ? TOTALS[i] : DATA[i][r - 2] ?? ""}
            </div>
          ))}
        </div>
      ))}
      <Smudge />
    </div>
  );
}

function VScroll() {
  return (
    <div className="absolute right-0 top-[398px] w-[27px] h-[980px] bg-[#efefef] flex flex-col items-center">
      <div className="w-[24px] h-full rounded-[12px] bg-[#f5f5f5] flex flex-col items-center pt-[5px]">
        <svg width="14" height="12" viewBox="0 0 14 12">
          <path d="M7 1l6 10H1z" fill="#6f6f6f" />
        </svg>
        <div className="mt-[8px] w-[13px] h-[905px] rounded-full bg-[#6f6f6f]" />
        <svg width="14" height="12" viewBox="0 0 14 12" className="mt-[22px]">
          <path d="M7 11 1 1h12z" fill="#6f6f6f" />
        </svg>
      </div>
    </div>
  );
}

function SheetTabs() {
  return (
    <div className="h-[46px] bg-[#efefef] flex items-start relative shrink-0 text-[#333]">
      <svg width="12" height="20" viewBox="0 0 12 20" className="ml-[27px] mt-[13px]">
        <path d="M10 1 2 10l8 9" fill="none" stroke="#aaa" strokeWidth="1.5" />
      </svg>
      <svg width="12" height="20" viewBox="0 0 12 20" className="ml-[34px] mt-[13px]">
        <path d="M2 1l8 9-8 9" fill="none" stroke="#999" strokeWidth="1.5" />
      </svg>
      <div className="ml-[69px] w-[81px] h-[41px] bg-white rounded-b-[7px] relative text-center text-[21px] leading-[38px] font-['Noto_Sans',sans-serif]">
        result
        <div className="absolute left-[11px] right-[11px] bottom-[5px] h-[4px] bg-[#107c41]" />
      </div>
      <div className="ml-[5px] mt-[10px] w-px h-[27px] bg-[#cfcfcf]" />
      <svg width="18" height="18" viewBox="0 0 18 18" className="ml-[59px] mt-[15px]">
        <path d="M9 1v16M1 9h16" stroke="#555" strokeWidth="1.3" />
      </svg>
      <div className="absolute left-[1469px] top-[18px] flex flex-col gap-[3px]">
        <div className="w-[3px] h-[3px] rounded-full bg-[#555]" />
        <div className="w-[3px] h-[3px] rounded-full bg-[#555]" />
        <div className="w-[3px] h-[3px] rounded-full bg-[#555]" />
      </div>
      <div className="absolute left-[1494px] top-[10px] w-[926px] h-[26px] bg-[#f6f6f6] rounded-[12px] flex items-center">
        <svg width="10" height="14" viewBox="0 0 10 14" className="ml-[7px]">
          <path d="M9 0v14L1 7z" fill="#6f6f6f" />
        </svg>
        <div className="ml-[8px] w-[723px] h-[12px] rounded-full bg-[#6f6f6f]" />
        <svg width="10" height="18" viewBox="0 0 10 18" className="ml-[165px]">
          <path d="M1 0v18l8-9z" fill="#6f6f6f" />
        </svg>
      </div>
    </div>
  );
}

function StatusBar() {
  return (
    <div className="h-[33px] bg-[#f3f3f3] border-t border-[#dedede] border-b-2 border-b-[#b3bcc2] flex items-center relative shrink-0 text-[17px] text-[#444]">
      <span className="ml-[5px]">就绪</span>
      <svg width="22" height="24" viewBox="0 0 22 24" className="ml-[25px]">
        <path d="M2 1h18v20H2z" fill="none" stroke="#555" strokeWidth="1.3" />
        <path d="M2 5h18M5 9h12" stroke="#777" />
        <circle cx="11" cy="15" r="4.5" fill="#fff" stroke="#444" strokeWidth="1.5" />
        <circle cx="11" cy="15" r="2" fill="#444" />
      </svg>
      <svg width="22" height="24" viewBox="0 0 22 24" className="ml-[22px]">
        <circle cx="10" cy="3.5" r="2.5" fill="none" stroke="#555" strokeWidth="1.2" />
        <path d="M1 5c3 3 5 4 6 5v4l-3 8M18 5c-3 3-5 4-7 5v3M7 15l2 7" fill="none" stroke="#555" strokeWidth="1.2" />
        <path d="M13 15c1-2 6-2 6 1 0 2-3 2-3 4M16 22v1" fill="none" stroke="#555" strokeWidth="1.2" />
      </svg>
      <span className="ml-[4px] text-[17.5px] whitespace-nowrap">辅助功能: 不可用</span>
      <div className="absolute left-[2013px] top-0 w-[57px] h-full bg-[#e0e0e0]" />
      <svg width="20" height="20" viewBox="0 0 20 20" className="absolute left-[2031px] top-[4px]">
        <path d="M1 1h18v18H1zM7 1v18M13 1v18M1 7h18M1 13h18" fill="none" stroke="#444" strokeWidth="1.3" />
      </svg>
      <svg width="20" height="20" viewBox="0 0 20 20" className="absolute left-[2089px] top-[4px]">
        <rect x="1" y="1" width="18" height="18" fill="none" stroke="#555" strokeWidth="1.2" />
        <rect x="5" y="3" width="10" height="14" fill="none" stroke="#555" strokeWidth="1.2" />
        <path d="M7 7h6M7 10h6M7 13h6" stroke="#555" />
      </svg>
      <svg width="20" height="20" viewBox="0 0 20 20" className="absolute left-[2147px] top-[4px]">
        <path d="M1 1h18v18H1zM1 13h18M7 1v12M13 1v12H7" fill="none" stroke="#555" strokeWidth="1.2" />
      </svg>
      <div className="absolute left-[2193px] top-[14px] w-[10px] h-[2px] bg-[#555]" />
      <div className="absolute left-[2212px] top-[14px] w-[142px] h-[2px] bg-[#666]" />
      <div className="absolute left-[2279px] top-[6px] w-[7px] h-[17px] bg-[#666]" />
      <svg width="12" height="12" viewBox="0 0 12 12" className="absolute left-[2361px] top-[9px]">
        <path d="M6 0v12M0 6h12" stroke="#555" strokeWidth="1.2" />
      </svg>
      <span className="absolute left-[2391px] top-[2px] text-[19px]">100%</span>
    </div>
  );
}

export default function App() {
  return (
    <div className="relative w-[2445px] h-[1457px] overflow-hidden bg-[#efefef] flex flex-col font-['Noto_Sans_CJK_SC','Noto_Sans',sans-serif]">
      <TitleBar />
      <TabRow />
      <Ribbon />
      <Qat />
      <Notice />
      <FormulaBar />
      <Sheet />
      <VScroll />
      <SheetTabs />
      <StatusBar />
    </div>
  );
}
